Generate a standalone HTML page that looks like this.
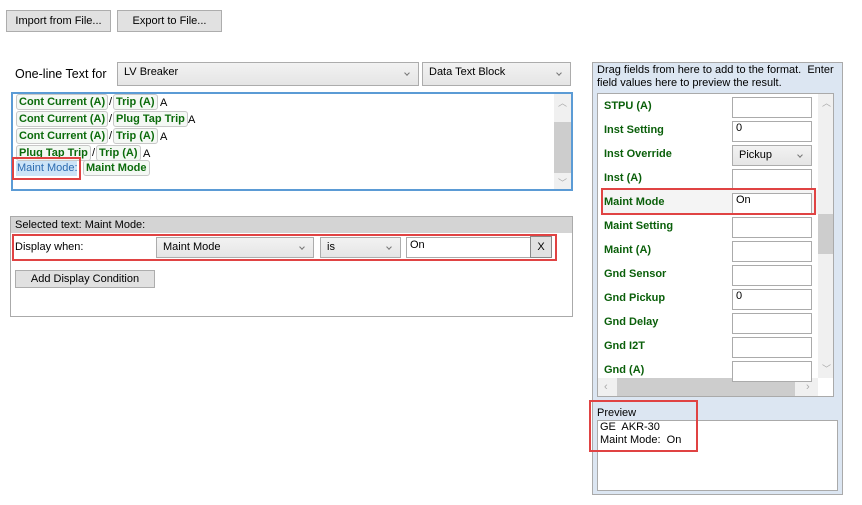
<!DOCTYPE html>
<html><head><meta charset="utf-8"><style>
*{box-sizing:border-box;margin:0;padding:0}
body{width:862px;height:505px;background:#fff;font-family:"Liberation Sans",sans-serif;font-size:11px;color:#000;position:relative;overflow:hidden}
.a{position:absolute}
.btn{position:absolute;background:#e1e1e1;border:1px solid #adadad;text-align:center;font-size:11px;color:#000}
.dd{position:absolute;background:linear-gradient(#f2f2f2,#e5e5e5);border:1px solid #acacac;padding:3px 0 0 6px;font-size:11px}
.dd:after{content:"";position:absolute;right:9px;top:50%;margin-top:-3px;width:3px;height:3px;border-right:1px solid #777;border-bottom:1px solid #777;transform:rotate(45deg)}
.tok{position:absolute;height:16px;border:1px solid #c8c8c8;border-radius:3px;background:#f4f8f4;color:#0b6b0b;font-weight:bold;font-size:11px;padding:0 2px;line-height:14px;white-space:nowrap}
.t{position:absolute;font-size:11px;white-space:nowrap}
.red{position:absolute;border:2px solid #e04343}
.lbl{position:absolute;left:12px;color:#0a5f0a;font-weight:bold;font-size:11px}
.tb{position:absolute;left:140px;width:80px;height:21px;border:1px solid #ababab;background:#fff;font-size:11px;padding-left:3px;line-height:12px}
</style></head><body>
<div class="btn" style="left:6px;top:10px;width:105px;height:22px;line-height:20px">Import from File...</div>
<div class="btn" style="left:117px;top:10px;width:105px;height:22px;line-height:20px">Export to File...</div>

<div class="t" style="left:15px;top:67px;font-size:12.5px">One-line Text for</div>
<div class="dd" style="left:117px;top:62px;width:302px;height:24px">LV Breaker</div>
<div class="dd" style="left:422px;top:62px;width:149px;height:24px">Data Text Block</div>

<div class="a" style="left:11px;top:92px;width:562px;height:99px;border:2px solid #5b9bd5;background:#fff">
  <div class="a" style="left:541px;top:0;width:17px;height:95px;background:#f0f0f0"></div>
  <div class="a" style="left:541px;top:28px;width:17px;height:51px;background:#cdcdcd"></div>
  <div class="t" style="left:545px;top:2px;color:#aaa;font-size:9px">︿</div>
  <div class="t" style="left:545px;top:82px;color:#aaa;font-size:9px">﹀</div>
</div>
<div class="tok" style="left:16px;top:94px">Cont Current (A)</div><div class="t" style="left:109px;top:96px">/</div><div class="tok" style="left:113px;top:94px">Trip (A)</div><div class="t" style="left:160px;top:97px">A</div>
<div class="tok" style="left:16px;top:111px">Cont Current (A)</div><div class="t" style="left:109px;top:113px">/</div><div class="tok" style="left:113px;top:111px">Plug Tap Trip</div><div class="t" style="left:188px;top:114px">A</div>
<div class="tok" style="left:16px;top:128px">Cont Current (A)</div><div class="t" style="left:109px;top:130px">/</div><div class="tok" style="left:113px;top:128px">Trip (A)</div><div class="t" style="left:160px;top:131px">A</div>
<div class="tok" style="left:16px;top:145px">Plug Tap Trip</div><div class="t" style="left:92px;top:147px">/</div><div class="tok" style="left:96px;top:145px">Trip (A)</div><div class="t" style="left:143px;top:148px">A</div>
<div class="a" style="left:16px;top:161px;width:61px;height:15px;background:#cce4f7"></div>
<div class="t" style="left:17px;top:162px;color:#2a6ab0">Maint Mode:</div>
<div class="tok" style="left:83px;top:160px">Maint Mode</div>
<div class="red" style="left:12px;top:157px;width:69px;height:23px"></div>

<div class="a" style="left:10px;top:216px;width:563px;height:101px;border:1px solid #aaa;background:#fff"></div>
<div class="a" style="left:11px;top:217px;width:561px;height:16px;background:#d4d4d4"></div>
<div class="t" style="left:15px;top:219px">Selected text: Maint Mode:</div>
<div class="t" style="left:15px;top:241px">Display when:</div>
<div class="dd" style="left:156px;top:237px;width:158px;height:21px">Maint Mode</div>
<div class="dd" style="left:320px;top:237px;width:81px;height:21px">is</div>
<div class="a" style="left:406px;top:237px;width:125px;height:21px;border:1px solid #ababab;padding:1px 0 0 3px">On</div>
<div class="btn" style="left:530px;top:236px;width:22px;height:22px;line-height:20px;border-color:#888">X</div>
<div class="red" style="left:12px;top:234px;width:545px;height:27px"></div>
<div class="btn" style="left:15px;top:270px;width:140px;height:18px;line-height:16px">Add Display Condition</div>

<div class="a" style="left:592px;top:62px;width:251px;height:433px;background:#dce6f2;border:1px solid #aaa"></div>
<div class="t" style="left:597px;top:64px;line-height:13px">Drag fields from here to add to the format.&nbsp; Enter<br>field values here to preview the result.</div>
<div class="a" style="left:597px;top:93px;width:237px;height:304px;background:#fff;border:1px solid #aaa;overflow:hidden">
  <div class="a" style="left:220px;top:0;width:16px;height:284px;background:#f0f0f0"></div>
  <div class="a" style="left:220px;top:120px;width:16px;height:40px;background:#cdcdcd"></div>
  <div class="a" style="left:0;top:284px;width:220px;height:18px;background:#f0f0f0"></div>
  <div class="a" style="left:19px;top:284px;width:178px;height:18px;background:#cdcdcd"></div>
  <div class="t" style="left:224px;top:2px;color:#aaa;font-size:9px">︿</div>
  <div class="t" style="left:224px;top:268px;color:#aaa;font-size:9px">﹀</div>
  <div class="t" style="left:6px;top:287px;color:#aaa">‹</div>
  <div class="t" style="left:208px;top:287px;color:#aaa">›</div>
  <div class="a" style="left:4px;top:96px;width:216px;height:24px;background:#f4f4f4"></div>
  <div class="lbl" style="top:6px;left:6px">STPU (A)</div><div class="tb" style="left:134px;top:3px"></div>
  <div class="lbl" style="top:30px;left:6px">Inst Setting</div><div class="tb" style="left:134px;top:27px">0</div>
  <div class="lbl" style="top:54px;left:6px">Inst Override</div><div class="dd" style="left:134px;top:51px;width:80px;height:21px">Pickup</div>
  <div class="lbl" style="top:78px;left:6px">Inst (A)</div><div class="tb" style="left:134px;top:75px"></div>
  <div class="lbl" style="top:102px;left:6px">Maint Mode</div><div class="tb" style="left:134px;top:99px">On</div>
  <div class="lbl" style="top:126px;left:6px">Maint Setting</div><div class="tb" style="left:134px;top:123px"></div>
  <div class="lbl" style="top:150px;left:6px">Maint (A)</div><div class="tb" style="left:134px;top:147px"></div>
  <div class="lbl" style="top:174px;left:6px">Gnd Sensor</div><div class="tb" style="left:134px;top:171px"></div>
  <div class="lbl" style="top:198px;left:6px">Gnd Pickup</div><div class="tb" style="left:134px;top:195px">0</div>
  <div class="lbl" style="top:222px;left:6px">Gnd Delay</div><div class="tb" style="left:134px;top:219px"></div>
  <div class="lbl" style="top:246px;left:6px">Gnd I2T</div><div class="tb" style="left:134px;top:243px"></div>
  <div class="lbl" style="top:270px;left:6px">Gnd (A)</div><div class="tb" style="left:134px;top:267px"></div>
</div>
<div class="red" style="left:601px;top:188px;width:215px;height:27px"></div>
<div class="t" style="left:597px;top:407px">Preview</div>
<div class="a" style="left:597px;top:420px;width:241px;height:71px;background:#fff;border:1px solid #aaa"></div>
<div class="t" style="left:600px;top:421px;line-height:13px">GE&nbsp; AKR-30<br>Maint Mode:&nbsp; On</div>
<div class="red" style="left:589px;top:400px;width:109px;height:52px"></div>
</body></html>
